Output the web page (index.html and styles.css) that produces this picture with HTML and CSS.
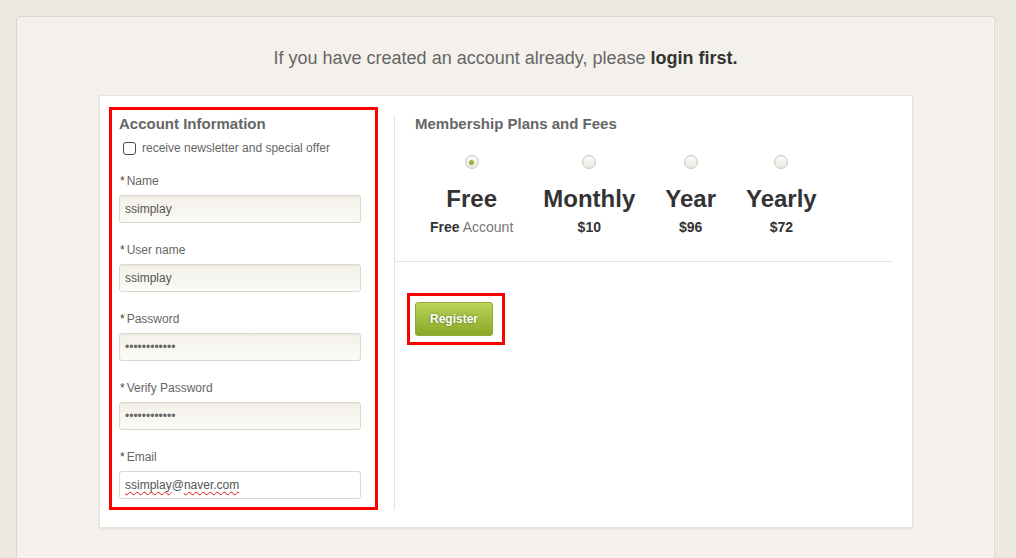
FILE: index.html
```html
<!DOCTYPE html>
<html lang="en">
<head>
<meta charset="utf-8">
<title>Register</title>
<link rel="stylesheet" href="styles.css">
</head>
<body>
<div class="panel">
  <p class="intro">If you have created an account already, please <b>login first.</b></p>
  <div class="card">
    <section class="account">
      <h2 class="sec-title">Account Information</h2>
      <label class="check-row"><span class="checkbox"></span><span>receive newsletter and special offer</span></label>
      <div class="field">
        <div class="label"><span class="req">*</span>Name</div>
        <div class="box">ssimplay</div>
      </div>
      <div class="field">
        <div class="label"><span class="req">*</span>User name</div>
        <div class="box">ssimplay</div>
      </div>
      <div class="field">
        <div class="label"><span class="req">*</span>Password</div>
        <div class="box pw">••••••••••••</div>
      </div>
      <div class="field">
        <div class="label"><span class="req">*</span>Verify Password</div>
        <div class="box pw">••••••••••••</div>
      </div>
      <div class="field">
        <div class="label"><span class="req">*</span>Email</div>
        <div class="box white"><span class="spell">ssimplay</span>@<span class="spell">naver.com</span></div>
      </div>
    </section>
    <section class="plans">
      <h2 class="sec-title plans-title">Membership Plans and Fees</h2>
      <div class="plan-row">
        <div class="plan">
          <span class="radio on"></span>
          <div class="plan-name">Free</div>
          <div class="plan-sub"><b>Free</b> Account</div>
        </div>
        <div class="plan">
          <span class="radio"></span>
          <div class="plan-name">Monthly</div>
          <div class="plan-sub"><b>$10</b></div>
        </div>
        <div class="plan">
          <span class="radio"></span>
          <div class="plan-name">Year</div>
          <div class="plan-sub"><b>$96</b></div>
        </div>
        <div class="plan">
          <span class="radio"></span>
          <div class="plan-name">Yearly</div>
          <div class="plan-sub"><b>$72</b></div>
        </div>
      </div>
      <div class="rule"></div>
      <div class="register-wrap"><button class="register">Register</button></div>
    </section>
  </div>
</div>
</body>
</html>
```
FILE: styles.css
```css
html, body {
  margin: 0;
  padding: 0;
}
body {
  background: #eee9df;
  font-family: "Liberation Sans", Arial, sans-serif;
  overflow: hidden;
  height: 558px;
}
.panel {
  margin: 16px 0 0 16px;
  width: 979px;
  height: 542px;
  box-sizing: border-box;
  background: #f4f1ec;
  border: 1px solid #ddd8ce;
  border-bottom: 0;
  border-radius: 4px 4px 0 0;
  padding-top: 29px;
  box-shadow: inset -1px 0 0 #fbfaf7;
}
.intro {
  margin: 0;
  text-align: center;
  font-size: 18px;
  line-height: 25px;
  color: #666;
}
.intro b {
  color: #333;
}
.card {
  width: 814px;
  box-sizing: border-box;
  margin: 24px 0 0 82px;
  background: #fff;
  border: 1px solid #e7e3db;
  box-shadow: 0 1px 2px rgba(0, 0, 0, 0.08);
  display: flex;
  padding: 11px 9px 17px 9px;
}
.account {
  width: 269px;
  box-sizing: border-box;
  border: 3px solid #ff0000;
  padding: 5px 13px 8px 7px;
}
.sec-title {
  margin: 0;
  font-size: 15px;
  line-height: 18px;
  font-weight: bold;
  color: #666;
}
.check-row {
  display: flex;
  align-items: center;
  margin-top: 8px;
  font-size: 12px;
  line-height: 14px;
  color: #666;
}
.checkbox {
  width: 13px;
  height: 13px;
  box-sizing: border-box;
  border: 1px solid #4a4a4a;
  border-radius: 3px;
  background: #fff;
  margin: 0 6px 0 4px;
}
.field {
  margin-top: 20px;
}
.field:first-of-type {
  margin-top: 19px;
}
.label {
  font-size: 12px;
  line-height: 14px;
  color: #666;
  padding-left: 1px;
}
.req {
  color: #444;
  margin-right: 2px;
}
.box {
  margin-top: 7px;
  width: 242px;
  height: 28px;
  box-sizing: border-box;
  border: 1px solid #dcd7ca;
  border-radius: 3px;
  background: linear-gradient(#f4f1ea, #fbfaf6);
  box-shadow: inset 0 1px 2px rgba(0, 0, 0, 0.05);
  padding-left: 5px;
  font-size: 12px;
  line-height: 26px;
  color: #555;
}
.box.pw {
  color: #666;
}
.box.white {
  background: #fff;
  box-shadow: none;
}
.spell {
  text-decoration: underline wavy #e01010;
  text-decoration-thickness: 1px;
  text-underline-offset: 2px;
  text-decoration-skip-ink: none;
}
.plans {
  width: 499px;
  box-sizing: border-box;
  margin: 8px 0 0 16px;
  border-left: 1px solid #e6e2da;
}
.plans-title {
  padding-left: 20px;
}
.plan-row {
  display: flex;
  gap: 30px;
  padding-left: 35px;
  margin-top: 22px;
}
.plan {
  display: flex;
  flex-direction: column;
  align-items: center;
}
.radio {
  width: 14px;
  height: 14px;
  box-sizing: border-box;
  border-radius: 50%;
  border: 1px solid #cfcabf;
  background: linear-gradient(#ffffff, #e9e6de);
  box-shadow: inset 0 1px 1px rgba(0, 0, 0, 0.06);
  position: relative;
}
.radio.on::after {
  content: "";
  position: absolute;
  left: 3.5px;
  top: 3.5px;
  width: 5px;
  height: 5px;
  border-radius: 50%;
  background: #96b535;
}
.plan-name {
  margin-top: 16px;
  font-size: 24px;
  line-height: 28px;
  font-weight: bold;
  color: #333;
}
.plan-sub {
  margin-top: 6px;
  font-size: 14px;
  line-height: 16px;
  color: #777;
}
.plan-sub b {
  color: #333;
}
.rule {
  margin-top: 26px;
  border-top: 1px solid #e6e2da;
}
.register-wrap {
  display: inline-block;
  margin: 31px 0 0 12px;
  border: 3px solid #ff0000;
  padding: 6px 9px 6px 5px;
}
.register {
  display: block;
  width: 78px;
  height: 34px;
  border: 1px solid #91ab38;
  border-radius: 3px;
  background: linear-gradient(#b8d357, #8aa828);
  color: #fff;
  font-family: "Liberation Sans", Arial, sans-serif;
  font-size: 12px;
  font-weight: bold;
  text-shadow: 0 0 2px rgba(60, 80, 10, 0.8);
  padding: 0;
}
```
